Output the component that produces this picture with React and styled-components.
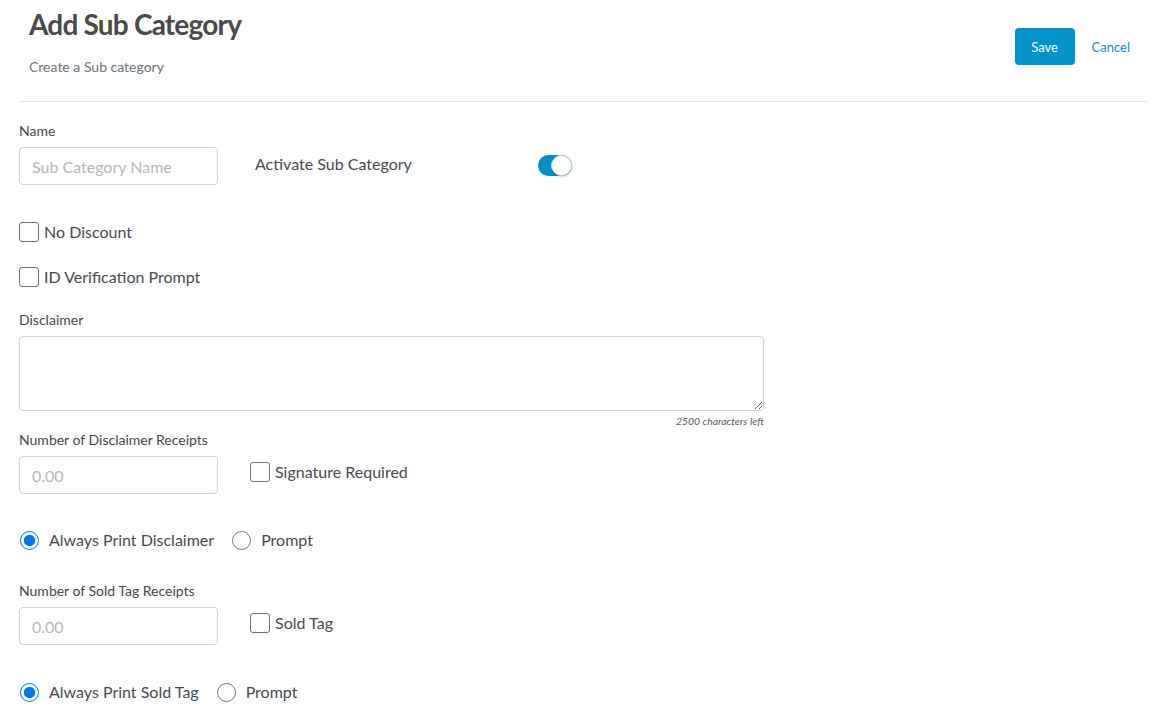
import React from "react";
import styled, { createGlobalStyle } from "styled-components";

const Global = createGlobalStyle`
  html, body { margin: 0; padding: 0; background: #fff; }
  body { font-family: Lato, "Open Sans", Arial, sans-serif; color: #454b50; }
  * { box-sizing: border-box; }
`;

const Page = styled.div`
  padding: 0 5px 0 19px;
`;

const Header = styled.header`
  display: flex;
  justify-content: space-between;
  align-items: flex-start;
  border-bottom: 1px solid #e2e4e6;
  padding: 7px 0 26px 10px;
`;

const TitleBlock = styled.div`
  display: flex;
  flex-direction: column;
`;

const Title = styled.h1`
  margin: 0;
  font-size: 28px;
  line-height: 34px;
  font-weight: 700;
  color: #4a4a4a;
  letter-spacing: -0.8px;
`;

const Subtitle = styled.p`
  margin: 18px 0 0;
  font-size: 14px;
  line-height: 16px;
  color: #6a7680;
`;

const Actions = styled.div`
  display: flex;
  align-items: center;
  margin-top: 21px;
`;

const SaveButton = styled.button`
  width: 60px;
  height: 37px;
  border: none;
  border-radius: 4px;
  background: #0094c9;
  color: #fff;
  font-family: inherit;
  font-size: 13px;
  cursor: pointer;
`;

const CancelButton = styled.button`
  background: none;
  border: none;
  padding: 0 17px;
  color: #1a8ad4;
  font-family: inherit;
  font-size: 13px;
  cursor: pointer;
`;

const Form = styled.div`
  display: flex;
  flex-direction: column;
  padding-top: 21px;
`;

const Label = styled.label`
  display: block;
  font-size: 14px;
  line-height: 16px;
  color: #3f474e;
  margin-top: ${(p) => p.$mt || 0}px;
  margin-bottom: 8px;
`;

const Row = styled.div`
  display: flex;
  align-items: ${(p) => p.$align || "center"};
  margin-top: ${(p) => p.$mt || 0}px;
`;

const TextInput = styled.input`
  width: 199px;
  height: 38px;
  border: 1px solid #ced5db;
  border-radius: 4px;
  padding: 0 12px;
  font-family: inherit;
  font-size: 16px;
  color: #444;
  outline: none;
  &::placeholder { color: #b4b8bb; }
`;

const ActivateText = styled.span`
  width: 283px;
  margin-left: 37px;
  margin-top: -4px;
  font-size: 16px;
  line-height: 20px;
  color: #454b50;
`;

const Toggle = styled.span`
  position: relative;
  display: inline-block;
  width: 34px;
  height: 21px;
  border-radius: 11px;
  background: #0090c8;
  margin-top: -1px;
`;

const Knob = styled.span`
  position: absolute;
  right: 0;
  top: 0;
  width: 21px;
  height: 21px;
  border-radius: 50%;
  background: #fff;
  border: 1px solid #d6dade;
  box-shadow: 0 1px 2px rgba(0, 0, 0, 0.2);
`;

const CheckRow = styled.label`
  display: flex;
  align-items: center;
  gap: 5px;
  margin-top: ${(p) => p.$mt || 0}px;
  margin-left: ${(p) => p.$ml || 0}px;
  font-size: 16px;
  line-height: 20px;
  color: #454b50;
  cursor: pointer;
`;

const Box = styled.span`
  width: 20px;
  height: 20px;
  border: 1px solid #6a6e72;
  border-radius: 3px;
  background: #fff;
  flex: none;
`;

const TextArea = styled.textarea`
  width: 745px;
  height: 75px;
  border: 1px solid #ced5db;
  border-radius: 4px;
  font-family: inherit;
  font-size: 15px;
  padding: 8px 12px;
  outline: none;
  display: block;
`;

const Counter = styled.div`
  width: 745px;
  text-align: right;
  font-size: 10.4px;
  line-height: 12px;
  font-style: italic;
  color: #555b60;
  margin-top: 4px;
`;

const RadioGroup = styled.div`
  display: flex;
  align-items: center;
  margin-top: ${(p) => p.$mt || 0}px;
`;

const RadioLabel = styled.label`
  display: flex;
  align-items: center;
  gap: 10px;
  margin-right: 17px;
  font-size: 16px;
  line-height: 20px;
  color: #454b50;
  cursor: pointer;
`;

const Radio = styled.input.attrs({ type: "radio" })`
  width: 19px;
  height: 19px;
  margin: 0 0 0 1px;
  accent-color: #0075ff;
`;

function Check({ label, mt, ml }) {
  return (
    <CheckRow $mt={mt} $ml={ml}>
      <Box />
      {label}
    </CheckRow>
  );
}

export default function App() {
  return (
    <>
      <Global />
      <Page>
        <Header>
          <TitleBlock>
            <Title>Add Sub Category</Title>
            <Subtitle>Create a Sub category</Subtitle>
          </TitleBlock>
          <Actions>
            <SaveButton>Save</SaveButton>
            <CancelButton>Cancel</CancelButton>
          </Actions>
        </Header>
        <Form>
          <Label>Name</Label>
          <Row>
            <TextInput placeholder="Sub Category Name" />
            <ActivateText>Activate Sub Category</ActivateText>
            <Toggle>
              <Knob />
            </Toggle>
          </Row>

          <Check label="No Discount" mt={37} />
          <Check label="ID Verification Prompt" mt={25} />

          <Label $mt={25}>Disclaimer</Label>
          <TextArea />
          <Counter>2500 characters left</Counter>

          <Label $mt={5}>Number of Disclaimer Receipts</Label>
          <Row $align="flex-start">
            <TextInput placeholder="0.00" />
            <Check label="Signature Required" mt={6} ml={32} />
          </Row>

          <RadioGroup $mt={36}>
            <RadioLabel>
              <Radio name="disc" defaultChecked />
              Always Print Disclaimer
            </RadioLabel>
            <RadioLabel>
              <Radio name="disc" />
              Prompt
            </RadioLabel>
          </RadioGroup>

          <Label $mt={33}>Number of Sold Tag Receipts</Label>
          <Row $align="flex-start">
            <TextInput placeholder="0.00" />
            <Check label="Sold Tag" mt={6} ml={32} />
          </Row>

          <RadioGroup $mt={37}>
            <RadioLabel>
              <Radio name="sold" defaultChecked />
              Always Print Sold Tag
            </RadioLabel>
            <RadioLabel>
              <Radio name="sold" />
              Prompt
            </RadioLabel>
          </RadioGroup>
        </Form>
      </Page>
    </>
  );
}
